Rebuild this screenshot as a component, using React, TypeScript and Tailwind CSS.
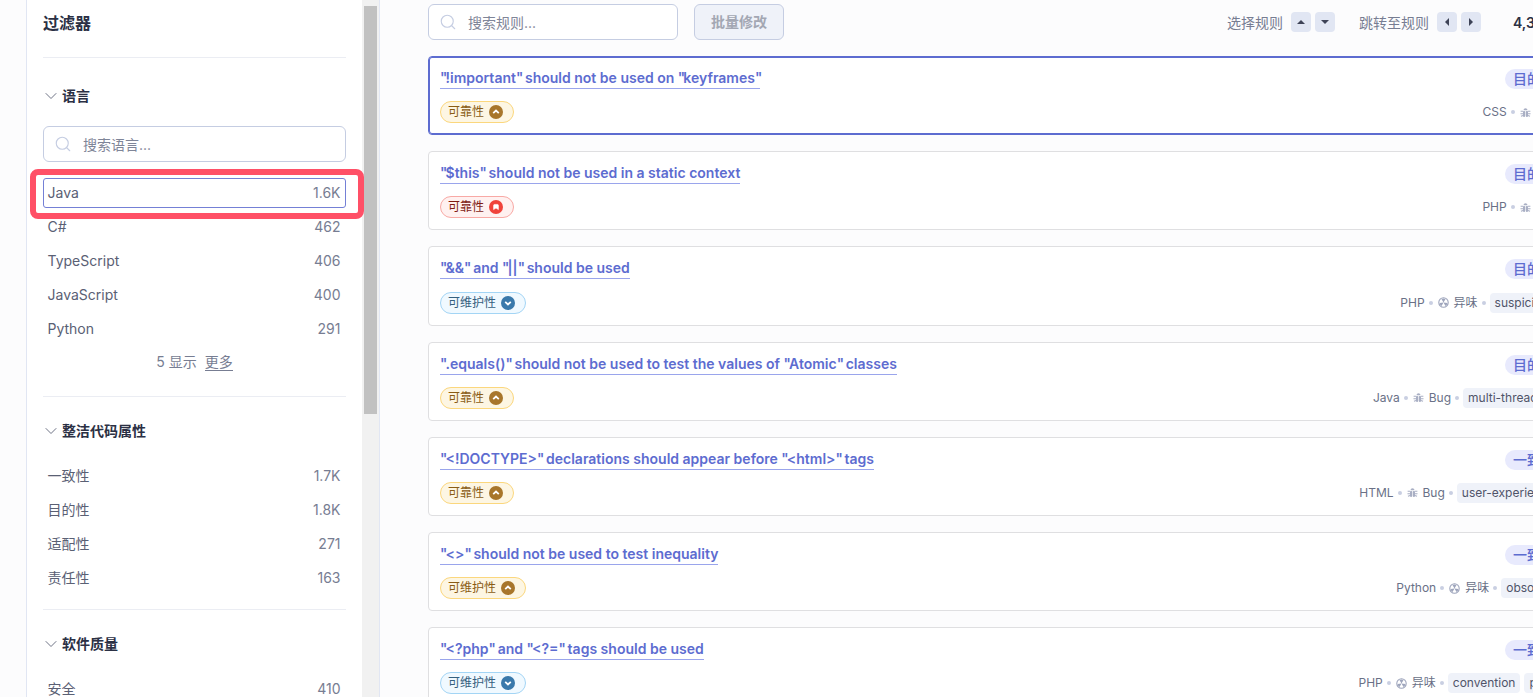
import { ChevronDown, Search } from "lucide-react";

const font = "font-['Inter','Noto_Sans_CJK_SC',sans-serif]";

function BugIcon({ className = "" }: { className?: string }) {
  return (
    <svg viewBox="0 0 14 14" className={className} fill="#a9afc4">
      <path d="M4.4 4.2C4.6 2.7 5.7 1.6 7 1.6s2.4 1.1 2.6 2.6z" />
      <rect x="3.8" y="5" width="2.8" height="7.6" rx="1" />
      <rect x="7.4" y="5" width="2.8" height="7.6" rx="1" />
      <path d="M.8 4.8h3v1.3h-3zM10.2 4.8h3v1.3h-3zM.6 8h3.2v1.3H.6zM10.2 8h3.2v1.3h-3.2zM1 11.2l2.8-1 .4 1.2-2.8 1zM13 11.2l-2.8-1-.4 1.2 2.8 1z" />
    </svg>
  );
}

function SmellIcon({ className = "" }: { className?: string }) {
  return (
    <svg viewBox="0 0 14 14" className={className} fill="none">
      <circle cx="7" cy="7" r="6" stroke="#9ea5bc" strokeWidth="1.4" />
      <path d="M7 7 4.4 2.6A5.2 5.2 0 0 1 9.6 2.6zM7 7l5 .6a5.2 5.2 0 0 1-2.5 4zM7 7l-2.5 4.6A5.2 5.2 0 0 1 2 7.6z" fill="#9ea5bc" />
    </svg>
  );
}

type Sev = "medium" | "high" | "low";
const sevStyles: Record<Sev, { pill: string; circle: string }> = {
  medium: { pill: "bg-[#fdf6e3] border-[#fbd77d] text-[#8a5c14]", circle: "bg-[#a8762b]" },
  high: { pill: "bg-[#fff1f0] border-[#f8a9a5] text-[#801b14]", circle: "bg-[#f0423a]" },
  low: { pill: "bg-[#f0f9ff] border-[#a3d5f5] text-[#35607e]", circle: "bg-[#3a79ab]" },
};

function SevPill({ label, sev }: { label: string; sev: Sev }) {
  const s = sevStyles[sev];
  return (
    <span className={`inline-flex h-[22px] items-center gap-[5px] rounded-full border pl-[7px] pr-[10px] text-xs ${s.pill}`}>
      {label}
      <span className={`flex h-[14px] w-[14px] items-center justify-center rounded-full ${s.circle}`}>
        <svg viewBox="0 0 10 10" className="h-[10px] w-[10px]" fill="none" stroke="white" strokeWidth="1.8">
          {sev === "medium" && <path d="M2.2 6.2 5 3.6l2.8 2.6" />}
          {sev === "low" && <path d="M2.2 3.8 5 6.4l2.8-2.6" />}
          {sev === "high" && <path d="M2.6 7.6V3.4c0-.6.4-1 1-1h2.8c.6 0 1 .4 1 1v4.2L5 6z" fill="white" strokeWidth="0.6" />}
        </svg>
      </span>
    </span>
  );
}

type Rule = {
  title: string;
  label: string;
  sev: Sev;
  attr: string;
  lang: string;
  type: "bug" | "smell";
  tags: string[];
};

const rules: Rule[] = [
  { title: '"!important" should not be used on "keyframes"', label: "可靠性", sev: "medium", attr: "目的性", lang: "CSS", type: "bug", tags: [] },
  { title: '"$this" should not be used in a static context', label: "可靠性", sev: "high", attr: "目的性", lang: "PHP", type: "bug", tags: [] },
  { title: '"&&" and "||" should be used', label: "可维护性", sev: "low", attr: "目的性", lang: "PHP", type: "smell", tags: ["suspicious"] },
  { title: '".equals()" should not be used to test the values of "Atomic" classes', label: "可靠性", sev: "medium", attr: "目的性", lang: "Java", type: "bug", tags: ["multi-threading"] },
  { title: '"<!DOCTYPE>" declarations should appear before "<html>" tags', label: "可靠性", sev: "medium", attr: "一致性", lang: "HTML", type: "bug", tags: ["user-experience"] },
  { title: '"<>" should not be used to test inequality', label: "可维护性", sev: "medium", attr: "一致性", lang: "Python", type: "smell", tags: ["obsolete"] },
  { title: '"<?php" and "<?=" tags should be used', label: "可维护性", sev: "low", attr: "一致性", lang: "PHP", type: "smell", tags: ["convention", "psr2"] },
];

function Title({ text }: { text: string }) {
  const parts = text.split('"');
  return (
    <span className="-mt-px border-b border-[#9aa5ec] pb-px text-sm leading-[19px] font-semibold text-[#5d6cd0]">
      {parts.map((p, i) => (
        <span key={i}>
          {i > 0 && <span className="tracking-[-1.8px]">"</span>}
          {p}
        </span>
      ))}
    </span>
  );
}

function RuleCard({ rule, selected }: { rule: Rule; selected?: boolean }) {
  return (
    <div
      className={`flex h-[79.2px] shrink-0 flex-col rounded border bg-white px-[11px] pt-[12px] ${
        selected ? "border-[#5d6cd0] shadow-[inset_0_0_0_1px_#5d6cd0]" : "border-[#dfdfe1]"
      }`}
    >
      <div className="flex h-5 items-start justify-between">
        <Title text={rule.title} />
        <span className="flex h-5 items-center rounded-full bg-[#e8eafd] px-2 text-sm font-medium text-[#5d6cd0]">{rule.attr}</span>
      </div>
      <div className={`mt-[12.2px] flex items-center justify-between ${rule.tags.length ? "pr-[3px]" : "pr-[5px]"}`}>
        <SevPill label={rule.label} sev={rule.sev} />
        <div className="flex items-center gap-1 text-xs text-[#6a7187]">
          <span>{rule.lang}</span>
          <span className="h-1 w-1 rounded-full bg-[#c9cfe2]" />
          {rule.type === "bug" ? <BugIcon className="ml-px h-[11px] w-[11px]" /> : <SmellIcon className="ml-px h-[11px] w-[11px]" />}
          <span className="ml-px">{rule.type === "bug" ? "Bug" : "异味"}</span>
          {rule.tags.length > 0 && <span className="h-1 w-1 rounded-full bg-[#c9cfe2]" />}
          {rule.tags.map((t) => (
            <span key={t} className="flex h-5 items-center rounded-sm bg-[#eff2f9] px-[5px] text-[#4f5469]">
              {t}
            </span>
          ))}
        </div>
      </div>
    </div>
  );
}

function Row({ name, count, selected }: { name: string; count: string; selected?: boolean }) {
  return (
    <div
      className={`flex h-[30px] items-center justify-between rounded-[3px] border pr-[4.5px] pl-[3.5px] text-sm ${
        selected ? "border-[#7480d6]" : "border-transparent"
      }`}
    >
      <span className="text-[#5a6074]">{name}</span>
      <span className="text-[#777d92]">{count}</span>
    </div>
  );
}

function SearchBox({ placeholder, className }: { placeholder: string; className: string }) {
  return (
    <div className={`flex h-9 items-center rounded-md border border-[#c5cde2] bg-white pl-[10px] ${className}`}>
      <Search className="h-[18px] w-[18px] text-[#c5cde2]" strokeWidth={1.5} />
      <span className="ml-[11px] pt-px text-sm text-[#7f8598]">{placeholder}</span>
    </div>
  );
}

function Heading({ children }: { children: string }) {
  return (
    <div className="-ml-[2px] flex h-5 items-center gap-px">
      <ChevronDown className="h-5 w-5 text-[#60667a]" strokeWidth={1.1} />
      <span className="text-sm font-semibold text-[#2b3044]">{children}</span>
    </div>
  );
}

function ArrowBtn({ d }: { d: string }) {
  return (
    <span className="flex h-5 w-5 items-center justify-center rounded-sm bg-[#e1e6f3]">
      <svg viewBox="0 0 10 10" className="h-[10px] w-[10px]" fill="#3e4357">
        <path d={d} />
      </svg>
    </span>
  );
}

export default function App() {
  return (
    <div className={`flex h-[697px] w-[1533px] overflow-hidden bg-[#fcfcfd] ${font}`}>
      <div className="w-[26px] shrink-0" />
      <aside className="flex w-[354px] shrink-0 border-x border-[#e1e6f3]">
        <div className="relative w-[335px] shrink-0 bg-white px-4">
          <div className="flex h-[58px] items-start border-b border-[#ebedf3] pt-[11px]">
            <span className="text-base leading-6 font-semibold text-[#2b3044]">过滤器</span>
          </div>

          <div className="border-b border-[#ebedf3] pt-7 pb-6">
            <Heading>语言</Heading>
            <SearchBox placeholder="搜索语言..." className="mt-5" />
            <div className="mt-4 flex flex-col gap-1">
              <Row name="Java" count="1.6K" selected />
              <Row name="C#" count="462" />
              <Row name="TypeScript" count="406" />
              <Row name="JavaScript" count="400" />
              <Row name="Python" count="291" />
            </div>
            <div className="mt-2 flex h-5 items-center justify-center gap-2 text-sm text-[#777d92]">
              <span>5 显示</span>
              <span className="border-b border-[#777d92] leading-4">更多</span>
            </div>
          </div>

          <div className="border-b border-[#ebedf3] pt-6 pb-4">
            <Heading>整洁代码属性</Heading>
            <div className="mt-5 flex flex-col gap-1">
              <Row name="一致性" count="1.7K" />
              <Row name="目的性" count="1.8K" />
              <Row name="适配性" count="271" />
              <Row name="责任性" count="163" />
            </div>
          </div>

          <div className="pt-6">
            <Heading>软件质量</Heading>
            <div className="mt-5 flex flex-col gap-1">
              <Row name="安全" count="410" />
            </div>
          </div>

          <div className="absolute top-[169px] left-[3px] h-[50px] w-[334px] rounded-lg border-[6px] border-[#ff5067]" />
        </div>
        <div className="w-[17px] shrink-0 bg-[#f1f1f1] px-[2px] pt-[6px]">
          <div className="h-[408px] bg-[#c1c1c1]" />
        </div>
      </aside>

      <main className="min-w-0 flex-1 overflow-hidden pt-1 pl-12">
        <div className="flex h-9 w-[1147px] items-center">
          <SearchBox placeholder="搜索规则..." className="w-[250px]" />
          <span className="ml-4 flex h-9 w-[90px] items-center justify-center rounded-md border border-[#c5cde2] bg-[#eff2f9] text-sm font-semibold text-[#a3a7b3]">
            批量修改
          </span>
          <span className="ml-[443px] pt-px text-sm text-[#777d92]">选择规则</span>
          <span className="ml-2 flex gap-1">
            <ArrowBtn d="M5 3l4 4H1z" />
            <ArrowBtn d="M5 7 1 3h8z" />
          </span>
          <span className="ml-6 pt-px text-sm text-[#777d92]">跳转至规则</span>
          <span className="ml-2 flex gap-1">
            <ArrowBtn d="M3 5l4-4v8z" />
            <ArrowBtn d="M7 5 3 9V1z" />
          </span>
          <span className="ml-8 pt-px text-sm font-semibold text-[#2b3044]">4,3</span>
        </div>
        <div className="mt-4 flex w-[1147px] flex-col gap-4">
          {rules.map((r, i) => (
            <RuleCard key={r.title} rule={r} selected={i === 0} />
          ))}
        </div>
      </main>
    </div>
  );
}
